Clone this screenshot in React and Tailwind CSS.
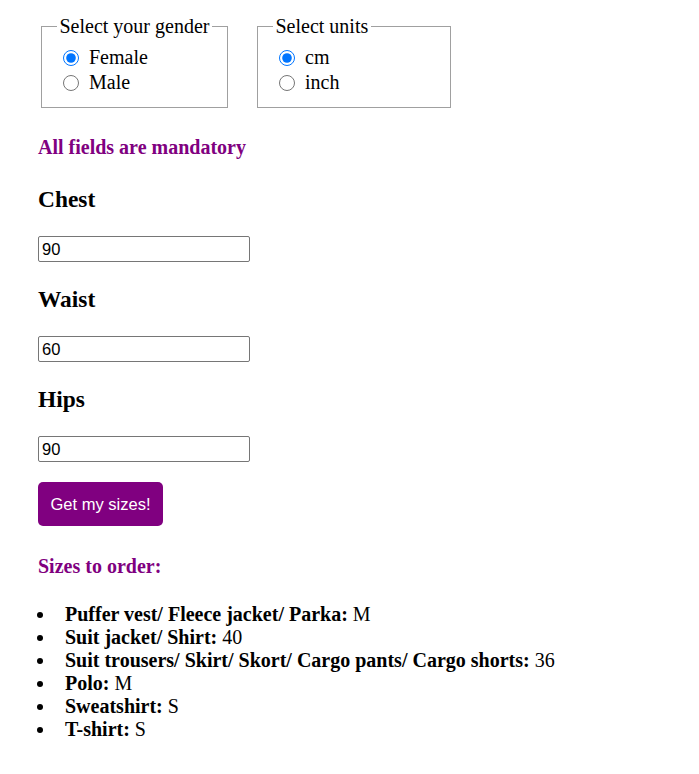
import React, { useState } from 'react'

const sizes = [
  { label: 'Puffer vest/ Fleece jacket/ Parka:', value: 'M' },
  { label: 'Suit jacket/ Shirt:', value: '40' },
  { label: 'Suit trousers/ Skirt/ Skort/ Cargo pants/ Cargo shorts:', value: '36' },
  { label: 'Polo:', value: 'M' },
  { label: 'Sweatshirt:', value: 'S' },
  { label: 'T-shirt:', value: 'S' },
]

function RadioRow({ name, value, checked, onChange, label }) {
  return (
    <label className="flex items-center h-[25px]">
      <input
        type="radio"
        name={name}
        value={value}
        checked={checked}
        onChange={() => onChange(value)}
        className="w-4 h-4 ml-[6px] mr-[10px] accent-[#0075ff]"
      />
      <span>{label}</span>
    </label>
  )
}

function Field({ label, value, onChange, first }) {
  return (
    <div>
      <h3 className={`text-[23.4px] font-bold leading-[27px] ${first ? 'mt-[27px]' : 'mt-[24px]'}`}>{label}</h3>
      <input
        type="text"
        value={value}
        onChange={(e) => onChange(e.target.value)}
        className="mt-[23px] block w-[212px] h-[26px] px-[3px] border border-[#767676] rounded-[2px] text-[16.5px] font-['Liberation_Sans',Arial,sans-serif] text-black"
      />
    </div>
  )
}

export default function App() {
  const [gender, setGender] = useState('female')
  const [units, setUnits] = useState('cm')
  const [chest, setChest] = useState('90')
  const [waist, setWaist] = useState('60')
  const [hips, setHips] = useState('90')

  return (
    <div className="min-h-screen bg-white text-black pl-[38px] pt-[15px] font-['Liberation_Serif','Times_New_Roman',serif] text-[20px] leading-[23px]">
      {/* Gender + units */}
      <div className="flex items-start">
        <fieldset className="ml-[3px] w-[187px] border border-[#a0a0a0] px-[15px] pt-[7px] pb-[12px]">
          <legend className="px-[2.5px]">Select your gender</legend>
          <RadioRow name="gender" value="female" checked={gender === 'female'} onChange={setGender} label="Female" />
          <RadioRow name="gender" value="male" checked={gender === 'male'} onChange={setGender} label="Male" />
        </fieldset>
        <fieldset className="ml-[29px] w-[194px] border border-[#a0a0a0] px-[15px] pt-[7px] pb-[12px]">
          <legend className="px-[2.5px]">Select units</legend>
          <RadioRow name="units" value="cm" checked={units === 'cm'} onChange={setUnits} label="cm" />
          <RadioRow name="units" value="inch" checked={units === 'inch'} onChange={setUnits} label="inch" />
        </fieldset>
      </div>

      <p className="mt-[28px] font-bold text-[#800080]">All fields are mandatory</p>

      <Field label="Chest" value={chest} onChange={setChest} first />
      <Field label="Waist" value={waist} onChange={setWaist} />
      <Field label="Hips" value={hips} onChange={setHips} />

      <button className="mt-[20px] w-[125px] h-[44px] rounded-[5px] bg-[#800080] text-white text-[16.5px] font-['Liberation_Sans',Arial,sans-serif]">
        Get my sizes!
      </button>

      <p className="mt-[29px] font-bold text-[#800080]">Sizes to order:</p>

      <ul className="mt-[25px] pb-[30px]">
        {sizes.map((s) => (
          <li key={s.label} className="flex items-center">
            <span className="w-[6px] h-[6px] ml-[-1px] mr-[22px] rounded-full bg-black" />
            <span>
              <b>{s.label}</b> {s.value}
            </span>
          </li>
        ))}
      </ul>
    </div>
  )
}
